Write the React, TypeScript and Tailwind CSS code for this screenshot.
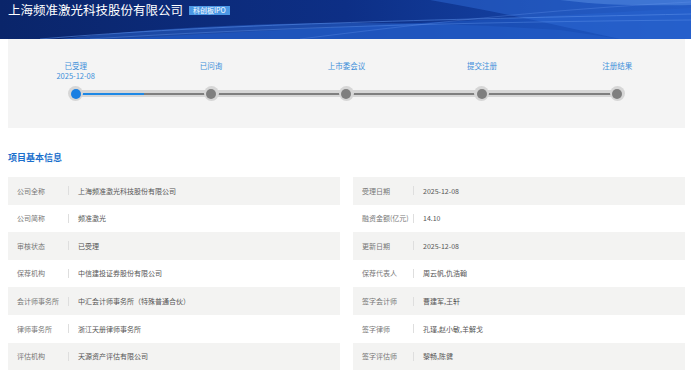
import React from 'react';

const steps = [
  { label: '已受理', date: '2025-12-08', active: true },
  { label: '已问询' },
  { label: '上市委会议' },
  { label: '提交注册' },
  { label: '注册结果' },
];

const rows: [string, string, string, string][] = [
  ['公司全称', '上海频准激光科技股份有限公司', '受理日期', '2025-12-08'],
  ['公司简称', '频准激光', '融资金额(亿元)', '14.10'],
  ['审核状态', '已受理', '更新日期', '2025-12-08'],
  ['保荐机构', '中信建投证券股份有限公司', '保荐代表人', '周云帆,仇浩翰'],
  ['会计师事务所', '中汇会计师事务所（特殊普通合伙）', '签字会计师', '曹建军,王轩'],
  ['律师事务所', '浙江天册律师事务所', '签字律师', '孔瑾,赵小敏,羊解戈'],
  ['评估机构', '天源资产评估有限公司', '签字评估师', '黎畅,陈健'],
];

function Cell({ label, value, gray }: { label: string; value: string; gray: boolean }) {
  return (
    <div className={`h-[27.6px] flex items-center ${gray ? 'bg-[#f3f3f2]' : 'bg-white'}`}>
      <div className="w-[60px] pl-[9px] text-[7px] text-[#777] whitespace-nowrap">{label}</div>
      <div className="w-px h-[9px] bg-[#dedede]" />
      <div className="ml-[9px] text-[7px] text-[#555] whitespace-nowrap">{value}</div>
    </div>
  );
}

export default function App() {
  return (
    <div
      className="w-[691px] h-[372px] overflow-hidden bg-white"
      style={{ fontFamily: '"Noto Sans CJK SC", "Noto Sans", sans-serif' }}
    >
      {/* banner */}
      <div className="relative h-[39px] bg-gradient-to-r from-[#0a256a] via-[#0d2f86] to-[#1a4fb8] overflow-hidden">
        <svg className="absolute inset-0" width="691" height="39" viewBox="0 0 691 39" preserveAspectRatio="none">
          <path d="M60 39 C200 22 380 18 560 30 L620 39 Z" fill="#2b64cc" opacity="0.55" />
          <path d="M120 39 C260 30 420 24 691 8 L691 39 Z" fill="#1f5ac6" opacity="0.6" />
          <path d="M430 0 C500 12 560 26 620 39 L691 39 L691 0 Z" fill="#2e6ad6" opacity="0.5" />
          <path d="M560 0 L691 0 L691 5 C640 6 600 5 560 0 Z" fill="#5a8fe4" opacity="0.5" />
          <path d="M40 39 C220 24 420 20 691 14" stroke="#5a8ee8" strokeWidth="0.8" fill="none" opacity="0.7" />
          <path d="M90 39 C260 28 460 22 691 20" stroke="#6b9cf0" strokeWidth="0.6" fill="none" opacity="0.6" />
          <path d="M300 39 C420 24 540 10 691 2" stroke="#6b9cf0" strokeWidth="0.6" fill="none" opacity="0.5" />
        </svg>
        <div className="relative flex items-center h-[20px] pl-[8px] pt-[1px]">
          <span className="text-[12.5px] leading-none text-white">上海频准激光科技股份有限公司</span>
          <span className="ml-[6px] h-[9px] px-[4px] flex items-center bg-[#4b98e6] text-white text-[7px] leading-none">
            科创板IPO
          </span>
        </div>
      </div>

      {/* progress panel */}
      <div className="mx-[8px] mr-[6px] h-[89px] bg-[#f4f4f4] pt-[22px]">
        <div className="grid grid-cols-5 h-[25px]">
          {steps.map((s) => (
            <div key={s.label} className="flex flex-col items-center text-[7.5px] leading-[10px] text-[#3d8fda]">
              <span>{s.label}</span>
              {s.date && <span>{s.date}</span>}
            </div>
          ))}
        </div>
        <div className="relative grid grid-cols-5 h-[15px]">
          <div className="absolute left-[10%] right-[10%] top-[4px] h-[7px] bg-[#d6d6d6] flex items-center">
            <div className="w-full h-[2px] bg-[#7f7f7f]" />
          </div>
          <div className="absolute left-[10%] w-[68px] top-[6.5px] h-[2px] bg-[#1e88e5]" />
          {steps.map((s) => (
            <div key={s.label} className="relative flex justify-center">
              <div className="w-[15px] h-[15px] rounded-full bg-[#d6d6d6] flex items-center justify-center">
                <div className={`w-[10px] h-[10px] rounded-full ${s.active ? 'bg-[#1a7fe2]' : 'bg-[#7f7f7f]'}`} />
              </div>
            </div>
          ))}
        </div>
      </div>

      {/* section */}
      <div className="px-[8px] mt-[24px] text-[9px] leading-[12px] font-bold text-[#1a6fcc]">项目基本信息</div>

      <div className="ml-[8px] mr-[6px] mt-[13px] grid grid-cols-2 gap-x-[13px]">
        {rows.map((r, i) => (
          <React.Fragment key={r[0]}>
            <Cell label={r[0]} value={r[1]} gray={i % 2 === 0} />
            <Cell label={r[2]} value={r[3]} gray={i % 2 === 0} />
          </React.Fragment>
        ))}
      </div>
    </div>
  );
}
